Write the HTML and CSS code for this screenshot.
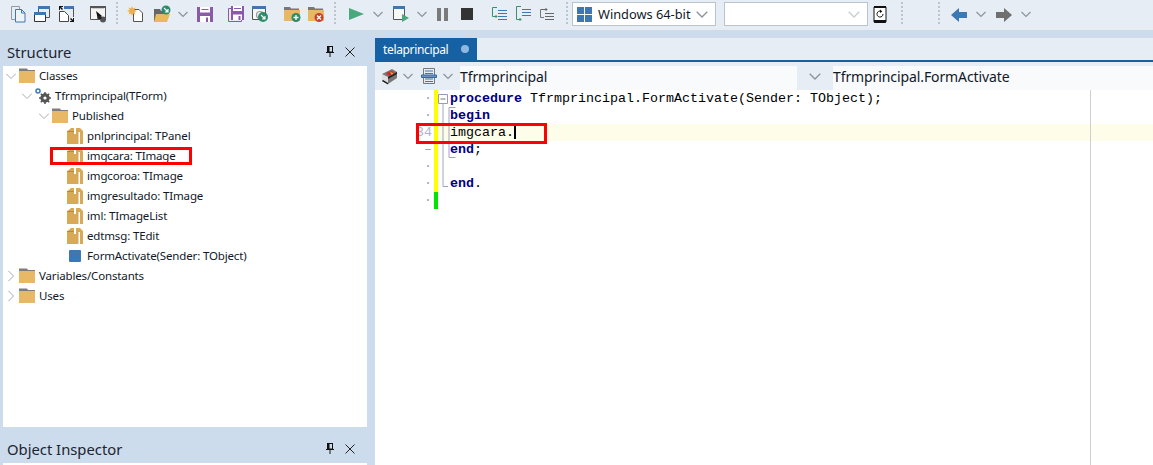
FILE: index.html
```html
<!DOCTYPE html>
<html lang="en">
<head>
<meta charset="utf-8">
<title>Delphi IDE</title>
<link rel="stylesheet" href="styles.css">
</head>
<body>
<svg class="defs" width="0" height="0" aria-hidden="true">
  <defs>
    <symbol id="chev" viewBox="0 0 12 12"><path d="M1.500 4 6 8.500 10.500 4" fill="none" stroke="#8a949c" stroke-width="1.200"/></symbol>
    <symbol id="chev-r" viewBox="0 0 10 10"><path d="M2.500 0 7.500 5 2.500 10" fill="none" stroke="#a4acb4" stroke-width="1"/></symbol>
    <symbol id="chev-d" viewBox="0 0 10 10"><path d="M0 2.500 5 7.500 10 2.500" fill="none" stroke="#a4acb4" stroke-width="1"/></symbol>
    <symbol id="folder" viewBox="0 0 16 16"><path d="M0 0.500h8l1 1.500h7v2H0z" fill="#7d7d7d"/><path d="M0 3h16v12H0z" fill="#e8b866"/></symbol>
    <symbol id="box" viewBox="0 0 16 16"><path d="M0 3.500 4 0h9l3 3v13H0z" fill="#d8aa55"/><path d="M7 0h2v6H7z" fill="#fff"/><path d="M11.500 4h1.500v12h-1.500z" fill="#fff"/><path d="M0 3h7v1H0z" fill="#b68a3a"/></symbol>
  </defs>
</svg>
<header class="toolbar">
  <svg class="ic" viewBox="0 0 24 24"><path d="M5.500 4.500h8v13h-8z" fill="none" stroke="#9a9a9a"/><path d="M9.500 7.500h6l3.500 3.500v9H9.500z" fill="#eef3f8" stroke="#3c78b4"/><path d="M15.500 7.500V11H19" fill="none" stroke="#3c78b4"/></svg>
  <svg class="ic" viewBox="0 0 24 24"><path d="M8.500 4.500h11v11h-11z" fill="none" stroke="#555"/><path d="M8 4h12v3H8z" fill="#3c78b4"/><path d="M4.500 10.500h11v9h-11z" fill="#fff" stroke="#333"/><path d="M4 10h12v3H4z" fill="#3c78b4"/></svg>
  <svg class="ic" viewBox="0 0 24 24"><path d="M5.500 9.500h5l4 4v6h-9z" fill="#fff" stroke="#444"/><path d="M10 4h10v3H10z" fill="#3c78b4"/><path d="M19.500 6v9" stroke="#555"/><path d="M5 4h4v1H7l2 2-1 1-2-2v2H5zM20 20h-4v-1h2l-2-2 1-1 2 2v-2h1z" fill="#111"/></svg>
  <svg class="ic m7" viewBox="0 0 24 24"><path d="M5.500 4.500h15v13h-15z" fill="#f4f4f4" stroke="#555"/><path d="M5 4h16v2H5z" fill="#555"/><path d="M7 6h12v1H7z" fill="#ccc"/><path d="M11 9l6 5h-3l-1 3.500z" fill="#111"/><circle cx="18" cy="17.500" r="3" fill="#555"/><path d="M12.500 14h4v3h-4z" fill="#222"/></svg>
  <i class="sep m7"></i>
  <svg class="ic m5" viewBox="0 0 24 24"><path d="M10.500 7.500h5.500l3.500 3.500v8.500h-9z" fill="#fff" stroke="#555"/><path d="M9 4l1 2.500 2.500-1-1 2.500 2.500 1-2.500 1 1 2.500-2.500-1-1 2.500-1-2.500-2.500 1 1-2.500-2.500-1 2.500-1-1-2.500 2.500 1z" fill="#eeb04e"/></svg>
  <svg class="ic m1" viewBox="0 0 24 24"><path d="M6 7h6l1 2h3v11H6z" fill="#666"/><path d="M8 12h14l-3 8H6z" fill="#e8b866"/><circle cx="18" cy="8" r="4.500" fill="#2e8b67"/><path d="M16 6l4 4m0-3v3h-3" fill="none" stroke="#fff" stroke-width="1.100"/></svg>
  <svg class="cv m5"><use href="#chev"/></svg>
  <svg class="ic m3" viewBox="0 0 24 24"><path d="M5 5h16v15H5z" fill="#8a5aa8"/><path d="M8 5h10v5.500H8zM8 14h10v6H8z" fill="#fff"/><path d="M14 15.500h2V20h-2zM9.500 7h7v1h-7z" fill="#8a5aa8"/></svg>
  <svg class="ic m7" viewBox="0 0 24 24"><path d="M5.500 6.500h13v13h-13z" fill="none" stroke="#8a5aa8"/><path d="M8 4h13v14H8z" fill="#8a5aa8"/><path d="M10 4h9v5h-9zM10 12.500h9V18h-9z" fill="#fff"/><path d="M11 6h7v1h-7zM15.500 14h2v4h-2z" fill="#8a5aa8"/></svg>
  <svg class="ic m1" viewBox="0 0 24 24"><path d="M4.500 4.500h13v13h-13z" fill="#f6f8fa" stroke="#555"/><path d="M4 4h14v3H4z" fill="#3c78b4"/><circle cx="12" cy="13" r="3.500" fill="none" stroke="#999" stroke-width="1.200"/><circle cx="15" cy="15" r="5" fill="#2e8b67"/><path d="M13 13l4 4m0-3v3h-3" fill="none" stroke="#fff" stroke-width="1.100"/></svg>
  <svg class="ic m7" viewBox="0 0 24 24"><path d="M5 5h6l1 1.500h8V9H5z" fill="#777"/><path d="M5 8h16v11H5z" fill="#e8b866"/><circle cx="17" cy="15.500" r="4.500" fill="#2e8b67"/><path d="M17 13v5m-2.500-2.500h5" stroke="#fff" stroke-width="1.300"/></svg>
  <svg class="ic m1" viewBox="0 0 24 24"><path d="M4 5h6l1 1.500h8V9H4z" fill="#777"/><path d="M4 8h16v11H4z" fill="#e8b866"/><circle cx="15" cy="15.500" r="4.500" fill="#c8402f"/><path d="M13 13.500l4 4m0-4l-4 4" stroke="#fff" stroke-width="1.300"/></svg>
  <i class="sep m6"></i>
  <svg class="ic m8" viewBox="0 0 24 24"><path d="M5 6l15 6-15 6z" fill="#4aa87e"/></svg>
  <svg class="cv m4"><use href="#chev"/></svg>
  <svg class="ic m2" viewBox="0 0 24 24"><path d="M7.500 4.500h11v13h-11z" fill="#f6f8fa" stroke="#555"/><path d="M7 4h12v3H7z" fill="#3c78b4"/><path d="M16 12l7 4-7 4z" fill="#4aa87e"/></svg>
  <svg class="cv m6"><use href="#chev"/></svg>
  <svg class="ic m2" viewBox="0 0 24 24"><path d="M7 6h4v13H7zM14 6h4v13h-4z" fill="#7a7a7a"/></svg>
  <svg class="ic m1" viewBox="0 0 24 24"><path d="M6 6h12v12H6z" fill="#333"/></svg>
  <svg class="ic m6" viewBox="0 0 24 24"><path d="M12 5.500H7.500v9H12" fill="none" stroke="#3a8f6d"/><path d="M8 14.500h4m-1.500-1.500 1.500 1.500-1.500 1.500" fill="none" stroke="#3a8f6d"/><path d="M13 8h9v1h-9zM13 11h9v1h-9zM13 14h9v1h-9zM13 17h9v1h-9z" fill="#3c78b4"/></svg>
  <svg class="ic m2" viewBox="0 0 24 24"><path d="M10 4.500H5.500v13H10" fill="none" stroke="#3a8f6d"/><path d="M6 17.500h4M8.500 16l1.500 1.500L8.500 19" fill="none" stroke="#3a8f6d"/><path d="M11 7h9v1h-9zM11 10h9v1h-9zM11 13h9v1h-9z" fill="#3c78b4"/></svg>
  <svg class="ic" viewBox="0 0 24 24"><path d="M9 7.500H5.500v8H9" fill="none" stroke="#777"/><path d="M6 7.500h6M10.500 6 12 7.500 10.500 9" fill="none" stroke="#666"/><path d="M10 11h9v1h-9zM10 14h9v1h-9zM10 17h9v1h-9z" fill="#666"/></svg>
  <i class="sep m7"></i>
  <div class="combo m4"><svg class="win" viewBox="0 0 16 16"><path d="M0 0h7.500v7.500H0zM8.500 0H16v7.500H8.500zM0 8.500h7.500V16H0zM8.500 8.500H16V16H8.500z" fill="#3c78b4"/></svg><span class="combo-text">Windows 64-bit</span><svg class="cv combo-cv"><use href="#chev"/></svg></div>
  <div class="combo m8"><svg class="cv combo-cv pale"><use href="#chev"/></svg></div>
  <svg class="ic" viewBox="0 0 24 24"><path d="M7 4.500h10a1 1 0 0 1 1 1v14a1 1 0 0 1-1 1H7a1 1 0 0 1-1-1v-14a1 1 0 0 1 1-1z" fill="#fff" stroke="#111"/><path d="M6 4h12v2H6zM6 18h12v2.500H6z" fill="#111"/><path d="M15 12a3 3 0 1 1-1.800-2.700" fill="none" stroke="#111"/><path d="M12 7.500l2.300 2-2.300 1.500z" fill="#111"/></svg>
  <i class="sep m9"></i>
  <i class="sep m35"></i>
  <svg class="ic m8" viewBox="0 0 24 24"><path d="M3 13 11 6v4h8v6h-8v4z" fill="#3c78b4"/></svg>
  <svg class="cv m3"><use href="#chev"/></svg>
  <svg class="ic m4" viewBox="0 0 24 24"><path d="M21 13 13 6v4H5v6h8v4z" fill="#6f6f6f"/></svg>
  <svg class="cv m5"><use href="#chev"/></svg>
</header>
<div class="workspace">
  <aside class="sidebar">
    <div class="panel-head">
      <h2 class="panel-title">Structure</h2>
      <svg class="pin" viewBox="0 0 8 11"><path d="M1 .5h6M1.500 .5v5.500h5V.5M0 6.500h8M4 6.500V11" fill="none" stroke="#111"/><path d="M1.500 .5h2v6h-2z" fill="#111"/></svg>
      <svg class="close" viewBox="0 0 10 10"><path d="M.5.500l9 9m0-9l-9 9" stroke="#222" fill="none"/></svg>
    </div>
    <ul class="tree">
      <li class="row l0"><svg class="cv"><use href="#chev-d"/></svg><svg class="ti"><use href="#folder"/></svg><span>Classes</span></li>
      <li class="row l1"><svg class="cv"><use href="#chev-d"/></svg><svg class="ti" viewBox="0 0 16 16"><circle cx="3" cy="3" r="2" fill="none" stroke="#3c78b4" stroke-width="1.500"/><circle cx="10" cy="10" r="3.500" fill="none" stroke="#555" stroke-width="2.500"/><path d="M10 4v12M4 10h12M5.800 5.800l8.400 8.400M14.200 5.800l-8.400 8.400" stroke="#555" stroke-width="1.500"/><circle cx="10" cy="10" r="1.600" fill="#fff"/></svg><span>Tfrmprincipal(TForm)</span></li>
      <li class="row l2"><svg class="cv"><use href="#chev-d"/></svg><svg class="ti"><use href="#folder"/></svg><span>Published</span></li>
      <li class="row l3"><svg class="ti"><use href="#box"/></svg><span>pnlprincipal: TPanel</span></li>
      <li class="row l3"><svg class="ti"><use href="#box"/></svg><span>imgcara: TImage</span></li>
      <li class="row l3"><svg class="ti"><use href="#box"/></svg><span>imgcoroa: TImage</span></li>
      <li class="row l3"><svg class="ti"><use href="#box"/></svg><span>imgresultado: TImage</span></li>
      <li class="row l3"><svg class="ti"><use href="#box"/></svg><span>iml: TImageList</span></li>
      <li class="row l3"><svg class="ti"><use href="#box"/></svg><span>edtmsg: TEdit</span></li>
      <li class="row l3"><i class="method"></i><span>FormActivate(Sender: TObject)</span></li>
      <li class="row l0"><svg class="cv"><use href="#chev-r"/></svg><svg class="ti"><use href="#folder"/></svg><span>Variables/Constants</span></li>
      <li class="row l0"><svg class="cv"><use href="#chev-r"/></svg><svg class="ti"><use href="#folder"/></svg><span>Uses</span></li>
    </ul>
    <div class="panel-head">
      <h2 class="panel-title">Object Inspector</h2>
      <svg class="pin" viewBox="0 0 8 11"><path d="M1 .5h6M1.500 .5v5.500h5V.5M0 6.500h8M4 6.500V11" fill="none" stroke="#111"/><path d="M1.500 .5h2v6h-2z" fill="#111"/></svg>
      <svg class="close" viewBox="0 0 10 10"><path d="M.5.500l9 9m0-9l-9 9" stroke="#222" fill="none"/></svg>
    </div>
    <div class="inspector-body"></div>
    <div class="callout callout-tree"></div>
  </aside>
  <main class="main">
    <div class="tabstrip">
      <div class="tab"><span>telaprincipal</span><i class="tab-dot"></i></div>
    </div>
    <div class="navbar">
      <svg class="ic" viewBox="0 0 24 24"><path d="M5 10 15 5l5 3v6L11 20l-6-3z" fill="#777"/><path d="M5 10l6 3v7l-6-3z" fill="#ddd"/><path d="M11 13l9-5v2l-9 5z" fill="#222"/><path d="M9 9l6-2 2 2-5 3z" fill="#d4252a"/><path d="M13 8l3 1-1 2z" fill="#e6c21e"/><path d="M6 16l5 3v1.500L5 17z" fill="#111"/></svg>
      <svg class="cv nav-cv1"><use href="#chev"/></svg>
      <svg class="ic nav-unit" viewBox="0 0 24 24"><path d="M6.500 4.500h11v15h-11z" fill="#e6edf4" stroke="#777"/><path d="M8 6.500h8v1H8zM8 9h8v1H8zM8 14.500h8v1H8zM8 17h8v1H8z" fill="#3c78b4"/><path d="M4.500 11h15v2.500h-15z" fill="#6c95c2" stroke="#2f6aa8"/></svg>
      <svg class="cv nav-cv1"><use href="#chev"/></svg>
      <div class="nav-field"><span>Tfrmprincipal</span></div>
      <svg class="cv nav-cv2"><use href="#chev"/></svg>
      <div class="nav-field nav-field-right"><span>Tfrmprincipal.FormActivate</span></div>
    </div>
    <div class="editor">
      <div class="code-line"><span class="num dot">·</span><i class="mark"></i><code class="src"><b>procedure</b> Tfrmprincipal.FormActivate(Sender: TObject);</code></div>
      <div class="code-line"><span class="num dot">·</span><i class="mark"></i><code class="src"><b>begin</b></code></div>
      <div class="code-line active"><span class="num">34</span><i class="mark"></i><code class="src">imgcara.<i class="caret"></i></code></div>
      <div class="code-line"><span class="num dot">–</span><i class="mark"></i><code class="src"><b>end</b>;</code></div>
      <div class="code-line"><span class="num dot">·</span><i class="mark"></i><code class="src"></code></div>
      <div class="code-line"><span class="num dot">·</span><i class="mark"></i><code class="src"><b>end</b>.</code></div>
      <div class="code-line"><span class="num dot">·</span><i class="mark saved"></i><code class="src"></code></div>
      <svg class="fold" viewBox="0 0 24 100" width="24" height="100"><path d="M.5 4.500h9v9h-9z" fill="#fff" stroke="#9a9ab8"/><path d="M2.500 9h5" stroke="#777"/><path d="M5 13.500V96.500h5M17.500 17.500H11V67.500h6.500" fill="none" stroke="#a3a3bf"/></svg>
      <div class="margin-line"></div>
      <div class="callout callout-code"></div>
    </div>
  </main>
</div>
</body>
</html>
```
FILE: styles.css
```css
* { box-sizing: border-box; }
html, body { margin: 0; height: 100%; overflow: hidden; }
body { font-family: "Noto Sans", "Open Sans", sans-serif; background: #cddcec; color: #111827; }
.defs { position: absolute; }
ul { list-style: none; margin: 0; padding: 0; }
svg { display: block; flex: none; }
.toolbar { display: flex; align-items: center; height: 30px; padding: 0 0 2px 6px; background: #e6edf4; }
.ic { width: 24px; height: 24px; }
.cv { width: 12px; height: 12px; }
.sep { width: 2px; height: 24px; background: repeating-linear-gradient(#bcc5cf 0 2px, transparent 2px 4px); }
.m1 { margin-left: 1px; } .m2 { margin-left: 2px; } .m3 { margin-left: 3px; } .m4 { margin-left: 4px; }
.m5 { margin-left: 5px; } .m6 { margin-left: 6px; } .m7 { margin-left: 7px; } .m8 { margin-left: 8px; }
.m9 { margin-left: 9px; } .m35 { margin-left: 35px; }
.combo { display: flex; align-items: center; width: 144px; height: 24px; padding: 0 6px 0 4px; background: #fff; border: 1px solid #b8c4ce; font-size: 12.800px; }
.win { width: 15px; height: 15px; }
.combo-text { margin-left: 6px; white-space: nowrap; }
.combo-cv { margin-left: auto; width: 14px; height: 14px; }
.pale { opacity: .45; }
.workspace { display: flex; height: 435px; }
.sidebar { position: relative; display: flex; flex-direction: column; width: 375px; padding: 0 8px 0 3px; }
.panel-head { display: flex; align-items: center; height: 36px; padding: 9px 4px 0 4px; flex: none; }
.panel-title { margin: 0; padding-bottom: 2px; font-size: 14.800px; font-weight: 400; color: #1c2530; flex: 1; }
.pin { width: 8px; height: 11px; margin: -2px 11px 0 0; }
.close { width: 10px; height: 10px; margin: -2px 8px 0 0; }
.tree { height: 361px; background: #fff; flex: none; font-size: 11.500px; letter-spacing: -.15px; }
.row { display: flex; align-items: center; height: 20px; white-space: nowrap; }
.row span { margin-left: 4px; padding-bottom: 2px; }
.row .cv { width: 10px; height: 10px; margin-right: 3px; }
.ti { width: 16px; height: 16px; }
.l0 { padding-left: 3px; } .l1 { padding-left: 19px; } .l2 { padding-left: 36px; } .l3 { padding-left: 64px; }
.method { width: 12px; height: 12px; margin: 0 2px; background: #3c78b4; border-radius: 1px; flex: none; }
.inspector-body { flex: 1; background: #fff; }
.callout { position: absolute; border: 3px solid #f00; pointer-events: none; }
.callout-tree { left: 50px; top: 117px; width: 142px; height: 18px; }
.main { flex: 1; display: flex; flex-direction: column; min-width: 0; }
.tabstrip { display: flex; height: 32px; padding-top: 8px; background: linear-gradient(#cddcec 8px, #e6edf4 8px); border-bottom: 2px solid #1661a3; }
.tab { display: flex; align-items: center; width: 102px; padding-left: 8px; background: #1661a3; color: #fff; font-size: 12px; letter-spacing: -.35px; }
.tab-dot { width: 8px; height: 8px; margin-left: 13px; border-radius: 50%; background: #8fb8e0; }
.navbar { display: flex; align-items: flex-end; height: 28px; padding-left: 2px; background: #e6edf4; }
.navbar > svg { align-self: center; }
.nav-cv1 { margin: 0 2px 0 1px; }
.nav-unit { margin-left: 1px; }
.nav-field { display: flex; align-items: center; width: 337px; height: 24px; padding-bottom: 4px; background: #f8fafc; margin-left: 4px; font-size: 14px; letter-spacing: -.1px; }
.nav-field-right { flex: 1; width: auto; margin-left: 0; }
.nav-cv2 { width: 14px; height: 14px; margin: 0 11px; }
.editor { position: relative; flex: 1; background: #fff; }
.code-line { display: flex; height: 17px; }
.num { width: 59px; padding-right: 2px; text-align: right; font: 13.330px/17px "Liberation Mono", monospace; color: #b0b4d0; }
.dot { color: #9a9fbd; padding-right: 2px; }
.mark { width: 4px; background: #ffff00; flex: none; }
.mark.saved { background: #00e600; }
.src { flex: 1; padding-left: 12px; font: 13.330px/17px "Liberation Mono", monospace; color: #000; white-space: pre; }
.src b { color: #000080; }
.active .src { background: #fdfdea; }
.caret { display: inline-block; width: 2px; height: 15px; background: #000; vertical-align: -3px; }
.fold { position: absolute; left: 63px; top: 0; }
.margin-line { position: absolute; left: 715px; top: 0; bottom: 0; width: 1px; background: #cfcfcf; }
.callout-code { left: 41px; top: 33px; width: 131px; height: 21px; }
```
